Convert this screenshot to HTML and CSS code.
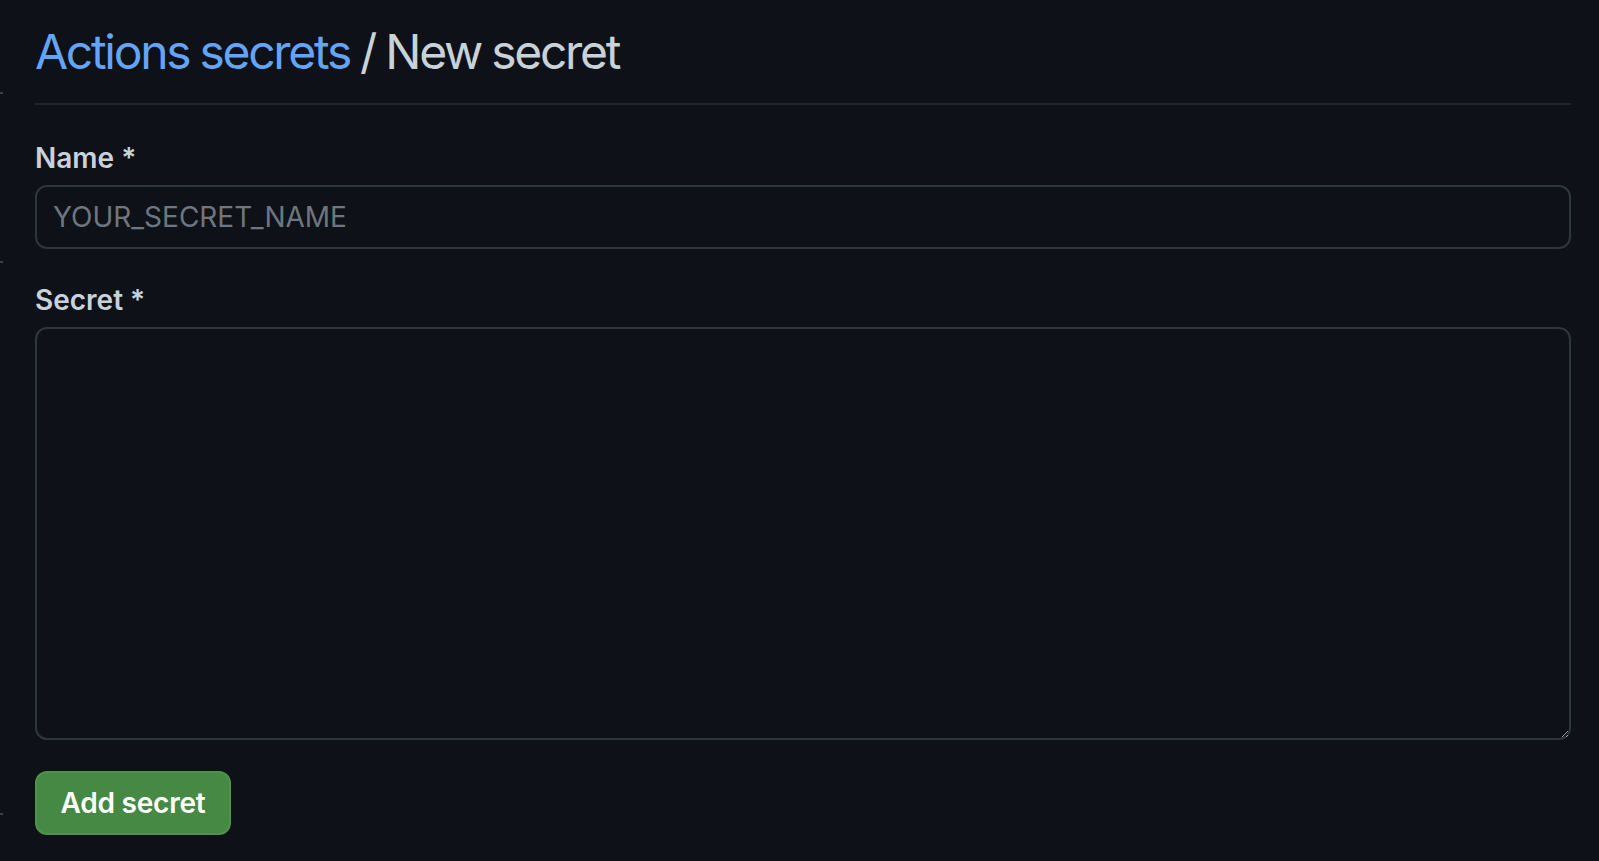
FILE: index.html
```html
<!DOCTYPE html>
<html lang="en">
<head>
<meta charset="utf-8">
<title>New secret</title>
<link rel="stylesheet" href="styles.css">
</head>
<body>
<div class="edge-marks" aria-hidden="true">
  <span class="mark mark-1"></span>
  <span class="mark mark-2"></span>
  <span class="mark mark-3"></span>
</div>
<main class="page">
  <div class="subhead">
    <h2 class="subhead-heading"><a class="crumb" href="#">Actions secrets</a> / New secret</h2>
  </div>
  <form class="secret-form">
    <div class="form-group">
      <label class="form-label" for="secret_name">Name *</label>
      <input class="form-control" id="secret_name" type="text" placeholder="YOUR_SECRET_NAME">
    </div>
    <div class="form-group">
      <label class="form-label" for="secret_value">Secret *</label>
      <textarea class="form-control form-textarea" id="secret_value"></textarea>
    </div>
    <button class="btn-primary" type="button">Add secret</button>
  </form>
</main>
</body>
</html>
```

FILE: styles.css
```css
html, body {
  margin: 0;
  padding: 0;
  background: #0e1117;
  color-scheme: dark;
}

body {
  font-family: Inter, "Noto Sans", "Liberation Sans", sans-serif;
  color: #c9d1d9;
  min-height: 861px;
  position: relative;
}

.edge-marks {
  position: absolute;
  left: 0;
  top: 0;
}

.mark {
  position: absolute;
  left: 0;
  width: 3px;
  height: 2px;
  background: #3b4047;
}

.mark-1 { top: 92px; }
.mark-2 { top: 261px; }
.mark-3 { top: 813px; }

.page {
  padding: 16px 28px 0 35px;
}

.subhead {
  border-bottom: 2px solid #21262d;
  padding-bottom: 15px;
  margin-bottom: 33px;
}

.subhead-heading {
  margin: 0;
  font-size: 48px;
  font-weight: 400;
  line-height: 72px;
  color: #c9d1d9;
  letter-spacing: -2.3px;
  word-spacing: -1px;
}

.crumb {
  color: #64a4f7;
  text-decoration: none;
}

.secret-form {
  display: flex;
  flex-direction: column;
  align-items: flex-start;
}

.form-group {
  width: 100%;
  display: flex;
  flex-direction: column;
  margin-bottom: 31px;
}

.form-label {
  font-size: 28px;
  font-weight: 600;
  line-height: 40px;
  color: #c9d1d9;
  margin-bottom: 7px;
}

.form-control {
  box-sizing: border-box;
  width: 100%;
  height: 64px;
  padding: 0 16px;
  font-family: Inter, "Noto Sans", "Liberation Sans", sans-serif;
  font-size: 28px;
  color: #c9d1d9;
  background: #0e1117;
  border: 2px solid #30363d;
  border-radius: 12px;
  outline: none;
}

.form-control::placeholder {
  color: #6e7681;
}

.form-textarea {
  height: 413px;
  padding: 16px;
  resize: vertical;
}

.btn-primary {
  box-sizing: border-box;
  height: 64px;
  width: 196px;
  padding: 0;
  white-space: nowrap;
  font-family: Inter, "Noto Sans", "Liberation Sans", sans-serif;
  font-size: 28px;
  font-weight: 600;
  letter-spacing: -0.2px;
  color: #ffffff;
  background: #458944;
  border: 2px solid #4f9249;
  border-radius: 12px;
  cursor: pointer;
}
```
